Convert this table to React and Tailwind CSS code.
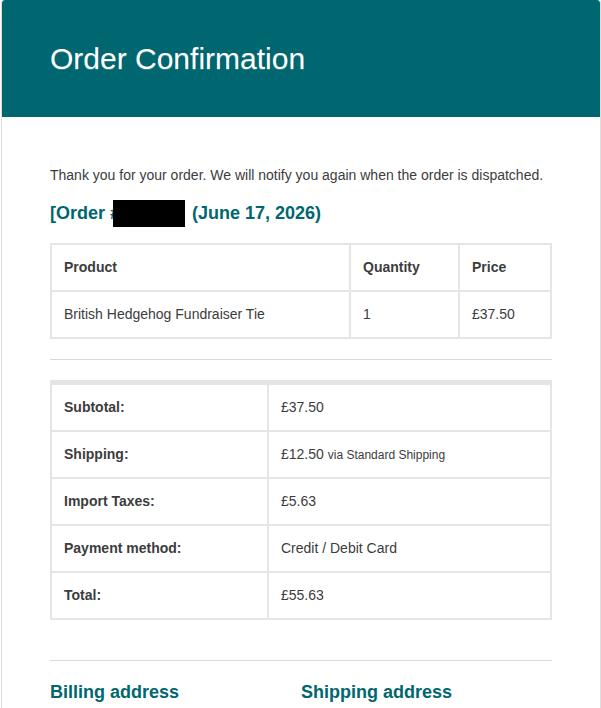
export default function App() {
    const cell = "border border-[#e5e5e5] p-3 text-left align-middle"
    const totals = [
        ["Subtotal:", "£37.50"],
        ["Shipping:", <>£12.50 <small className="text-[12px]">via Standard Shipping</small></>],
        ["Import Taxes:", "£5.63"],
        ["Payment method:", "Credit / Debit Card"],
        ["Total:", "£55.63"],
    ]
    return (
        <div className="min-h-screen bg-white font-['Liberation_Sans',Arial,Helvetica,sans-serif]">
            <div className="ml-[1px] w-[600px] overflow-hidden rounded-[3px] border-x border-b border-[#dedede] bg-white">
                <div className="rounded-t-[3px] bg-[#00666f] px-12 py-9">
                    <h1 className="text-[30px] font-light leading-[1.5] text-white [text-shadow:0_1px_0_#338589]">
                        Order Confirmation
                    </h1>
                </div>

                <div className="p-12 text-[14px] leading-[1.5] text-[#3c3c3c]">
                    <p className="mb-4">Thank you for your order. We will notify you again when the order is dispatched.</p>

                    {/* order number is redacted in the screenshot */}
                    <h2 className="mb-[18px] text-[18px] font-bold leading-[1.3] text-[#00666f]">
                        [Order #<span className="relative inline-block h-0 w-[67px]">
                            <span className="absolute left-[-7px] top-[-19px] h-[27px] w-[72px] bg-black"></span>
                        </span> (June 17, 2026)
                    </h2>

                    <table className="w-full table-fixed border-separate border-spacing-0 border border-[#e5e5e5]">
                        <thead>
                            <tr>
                                <th className={cell + " w-[299px] font-bold"}>Product</th>
                                <th className={cell + " w-[109px] font-bold"}>Quantity</th>
                                <th className={cell + " font-bold"}>Price</th>
                            </tr>
                        </thead>
                        <tbody>
                            <tr>
                                <td className={cell}>British Hedgehog Fundraiser Tie</td>
                                <td className={cell}>1</td>
                                <td className={cell}>£37.50</td>
                            </tr>
                        </tbody>
                    </table>

                    <div className="my-5 h-px bg-[#d9d9d9]"></div>

                    <table className="w-full table-fixed border-separate border-spacing-0 border border-[#e5e5e5]">
                        <tbody>
                            {totals.map(([label, value], i) => (
                                <tr key={label}>
                                    <th className={cell + " w-[217px] font-bold" + (i === 0 ? " border-t-4" : "")}>{label}</th>
                                    <td className={cell + (i === 0 ? " border-t-4" : "")}>{value}</td>
                                </tr>
                            ))}
                        </tbody>
                    </table>

                    <div className="mb-5 mt-10 h-px bg-[#d9d9d9]"></div>

                    <div className="grid grid-cols-2">
                        <h2 className="text-[18px] font-bold leading-[1.3] text-[#00666f]">Billing address</h2>
                        <h2 className="text-[18px] font-bold leading-[1.3] text-[#00666f]">Shipping address</h2>
                    </div>
                </div>
            </div>
        </div>
    )
}
